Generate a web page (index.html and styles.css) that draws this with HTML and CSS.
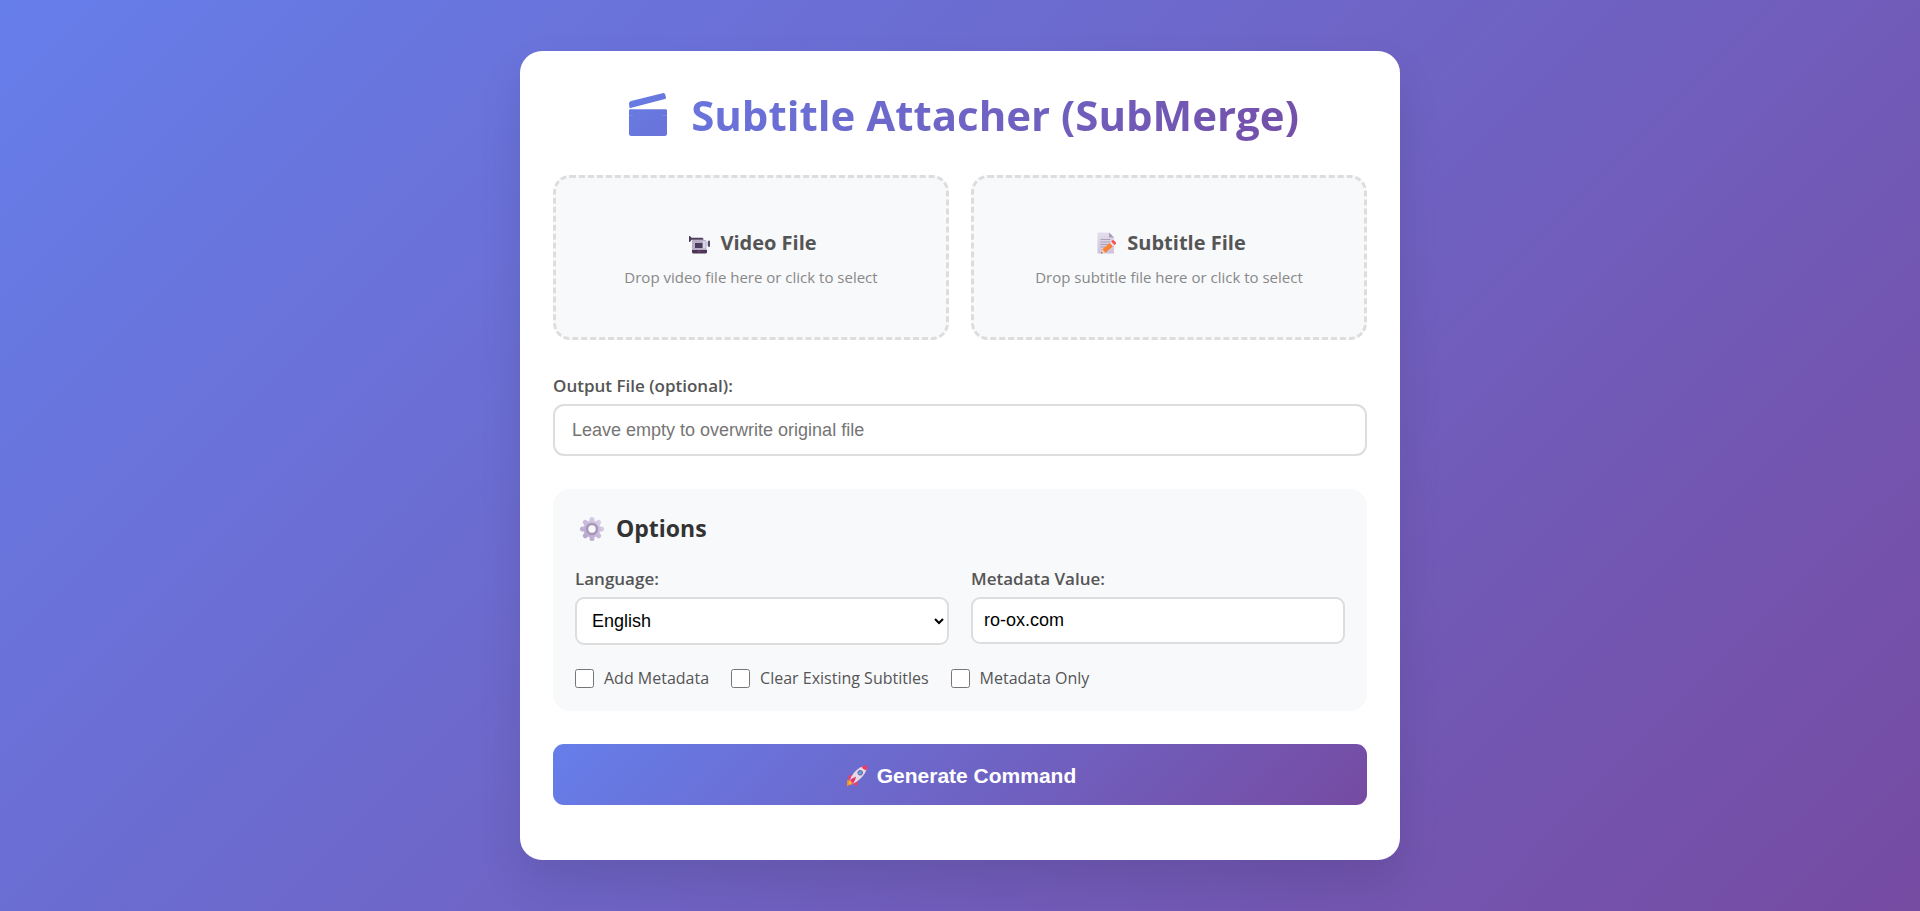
FILE: index.html
```html
<!DOCTYPE html>
<html lang="en">
<head>
<meta charset="utf-8">
<meta name="viewport" content="width=device-width, initial-scale=1">
<title>Subtitle Attacher (SubMerge)</title>
<link rel="stylesheet" href="styles.css">
</head>
<body>
<main class="card">
  <h1 class="title">
    <svg class="title-icon" viewBox="0 0 38 44" aria-hidden="true">
      <defs><linearGradient id="clap" x1="0" y1="0" x2="1" y2="1"><stop offset="0" stop-color="#667ce3"/><stop offset="1" stop-color="#6a73d9"/></linearGradient></defs>
      <path fill="url(#clap)" d="M0 10.500Q0 8.500 2 8L33.500 .2Q35.500 -.2 36.200 1.500L37 4.500Q37.200 5.700 36 6.100L.5 15.200ZM0 17.500Q0 16.300 1.200 16.300H36.800Q38 16.300 38 17.500V40.500Q38 43 35.500 43H2.500Q0 43 0 40.500Z"/>
      <path stroke="#8492e6" stroke-width=".6" d="M0 22.500H4M33 22.500H38"/>
    </svg>
    <span class="title-text">Subtitle Attacher (SubMerge)</span>
  </h1>

  <div class="drops">
    <button type="button" class="drop">
      <span class="drop-title">
        <svg class="icon" viewBox="0 0 22 22" aria-hidden="true">
          <path fill="#b9aec6" d="M3 8H16Q17.500 8 17.500 9.500V18H3Z"/>
          <path fill="#dcd5e4" d="M13.800 9H16.500V16.500H13.800Z"/>
          <path fill="#4b3d5c" d="M0 4H1L2.500 5.800H13Q14.500 5.800 14.500 7.800H2.500L1 10H0Z"/>
          <rect x="6" y="11" width="7.500" height="5" fill="#4b3d5c"/>
          <path fill="#cfc6d8" d="M17.500 9.500H19V14H17.500Z"/>
          <rect x="19" y="8.500" width="2" height="6.500" rx="1" fill="#584a6b"/>
          <path fill="#4b3658" d="M3 18H18V20Q18 21.500 16.500 21.500H4.500Q3 21.500 3 20Z"/>
          <circle cx="10" cy="19.600" r=".8" fill="#d03b5b"/>
        </svg>
        Video File
      </span>
      <span class="drop-hint">Drop video file here or click to select</span>
    </button>
    <button type="button" class="drop">
      <span class="drop-title">
        <svg class="icon" viewBox="0 0 22 22" aria-hidden="true">
          <defs>
            <linearGradient id="sheet" x1="0" y1="0" x2="0" y2="1"><stop offset="0" stop-color="#e4deec"/><stop offset="1" stop-color="#cfc2db"/></linearGradient>
            <linearGradient id="wood" x1="0" y1="0" x2="1" y2="1"><stop offset="0" stop-color="#ff9d3c"/><stop offset="1" stop-color="#f26732"/></linearGradient>
          </defs>
          <path fill="url(#sheet)" d="M2 .5H13L18 5.500V21.500H2Q1.500 21.500 1.500 21V1Q1.500 .5 2 .5Z"/>
          <path fill="#a99bb9" d="M13 .5L18 5.500H14Q13 5.500 13 4.500Z"/>
          <path stroke="#a79cb4" stroke-width=".9" d="M4.500 7.500H14.500M4.500 10H14.500M4.500 12.500H13M4.500 15H10"/>
          <path fill="#ffd0a0" d="M5 21.500L6.500 17L9.500 20.500Z"/>
          <path fill="#54305c" d="M5 21.500L5.500 19.900L6.900 21Z"/>
          <path fill="url(#wood)" d="M6.300 17.400L13.800 10.700L17 14.300L9.300 20.800Z"/>
          <path fill="#e9e0ed" d="M13.800 10.700L15.200 9.500L18.400 13L17 14.300Z"/>
          <path fill="#f8504f" d="M15.200 9.500L16.500 8.300Q17.300 7.700 18 8.500L19.900 10.600Q20.500 11.300 19.800 12L18.400 13Z"/>
        </svg>
        Subtitle File
      </span>
      <span class="drop-hint">Drop subtitle file here or click to select</span>
    </button>
  </div>

  <div class="field output">
    <label class="label" for="output">Output File (optional):</label>
    <input class="control control-large" id="output" type="text" placeholder="Leave empty to overwrite original file">
  </div>

  <section class="options">
    <h2 class="options-title">
      <svg class="icon-gear" viewBox="0 0 24 24" aria-hidden="true">
        <defs><linearGradient id="gear" gradientUnits="userSpaceOnUse" x1="2" y1="22" x2="22" y2="2"><stop offset="0" stop-color="#b3a1cc"/><stop offset="1" stop-color="#ddd5e9"/></linearGradient></defs>
        <g stroke="url(#gear)" stroke-width="5" stroke-linecap="round">
          <path d="M12 2.500V21.500M2.500 12H21.500M5.300 5.300L18.700 18.700M18.700 5.300L5.300 18.700"/>
        </g>
        <circle cx="12" cy="12" r="8.500" fill="url(#gear)"/>
        <circle cx="12" cy="12" r="5" fill="#f8f9fb" stroke="#a796ba" stroke-width="2.600"/>
      </svg>
      Options
    </h2>
    <div class="option-grid">
      <div class="field">
        <label class="label" for="language">Language:</label>
        <select class="control control-select" id="language">
          <option>English</option>
          <option>Romanian</option>
        </select>
      </div>
      <div class="field">
        <label class="label" for="metadata">Metadata Value:</label>
        <input class="control" id="metadata" type="text" value="ro-ox.com">
      </div>
    </div>
    <div class="checks">
      <label class="check" for="add"><input class="box" type="checkbox" id="add">Add Metadata</label>
      <label class="check" for="clear"><input class="box" type="checkbox" id="clear">Clear Existing Subtitles</label>
      <label class="check" for="only"><input class="box" type="checkbox" id="only">Metadata Only</label>
    </div>
  </section>

  <button type="button" class="generate">
    <svg class="icon" viewBox="0 0 22 22" aria-hidden="true">
      <path fill="#f58b2b" d="M1 15.500L4 14.500L7 18Q6.500 20.500 3.500 20L1 21.500Z"/>
      <path fill="#ffb43b" d="M2.500 17L5 16L5.500 18.500L3 19.500Z"/>
      <path fill="#ee3e6d" d="M7.500 9.500L3 10.500Q1.500 12 2 14L6 13.500ZM12 15L11.500 19.500Q11 21.500 9.500 21.500L7.500 17Z"/>
      <path fill="#e2dae6" d="M4 15.500Q6 7.500 14 2.500Q17.500 .8 20.500 1Q21 4.500 19 8Q14.500 15.500 7 18.500Z"/>
      <path fill="#f3375d" d="M15.500 1.800Q18 .6 21 .6Q21.300 3.500 20.300 5.500Q17.200 5 15.500 1.800Z"/>
      <path fill="#e73064" d="M4 15Q6.500 13 10 11.500Q9.500 15.500 7 18.500Z"/>
      <circle cx="14.200" cy="7.800" r="2.300" fill="#55a4e8" stroke="#765c92" stroke-width="1"/>
    </svg>
    Generate Command
  </button>
</main>
</body>
</html>
```
FILE: styles.css
```css
* {
  box-sizing: border-box;
  margin: 0;
  padding: 0;
}

body {
  min-height: 100vh;
  display: flex;
  align-items: center;
  justify-content: center;
  padding: 22px;
  background: linear-gradient(135deg, #667eea 0%, #764ba2 100%);
  color: #333;
  font-family: "Segoe UI", "Open Sans", "Noto Sans", sans-serif;
}

.card {
  width: 100%;
  max-width: 880px;
  padding: 33px 33px 55px;
  background: #fff;
  border-radius: 22px;
  box-shadow: 0 22px 44px rgba(0, 0, 0, 0.1);
}

.title {
  display: flex;
  align-items: center;
  justify-content: center;
  gap: 24px;
  margin-bottom: 33px;
  padding: 4px 0 0 8px;
  font-size: 42px;
  line-height: 54px;
  font-weight: 700;
  background: linear-gradient(135deg, #667eea 0%, #764ba2 100%);
  -webkit-background-clip: text;
  background-clip: text;
  -webkit-text-fill-color: transparent;
}

.title-icon {
  width: 38px;
  height: 44px;
}

.drops,
.option-grid {
  display: grid;
  grid-template-columns: 1fr 1fr;
  gap: 22px;
}

.drops {
  margin-bottom: 33px;
}

.drop {
  display: flex;
  flex-direction: column;
  align-items: center;
  gap: 6px;
  padding: 48px 30px;
  background: #f8f9fb;
  border: 3px dashed #ddd;
  border-radius: 17px;
  font-family: inherit;
  cursor: pointer;
}

.drop-title {
  display: flex;
  align-items: center;
  gap: 9px;
  padding-left: 4px;
  color: #555;
  font-size: 20px;
  line-height: 34px;
  font-weight: 700;
}

.drop-hint {
  color: #888;
  font-size: 15px;
  line-height: 23px;
}

.icon {
  width: 22px;
  height: 22px;
}

.field {
  display: flex;
  flex-direction: column;
  align-items: stretch;
  gap: 6px;
}

.output {
  margin-bottom: 33px;
}

.label {
  color: #555;
  font-size: 17px;
  line-height: 25px;
  font-weight: 600;
}

.control {
  width: 100%;
  padding: 11px;
  background: #fff;
  border: 2px solid #ddd;
  border-radius: 9px;
  color: #000;
  font-family: "Liberation Sans", Arial, sans-serif;
  font-size: 18px;
  line-height: 21px;
}

.control-large {
  height: 52px;
  padding: 0 17px;
  border-radius: 11px;
}

.control::placeholder {
  color: #757575;
}

.control-select {
  height: 48px;
}

.options {
  margin-bottom: 33px;
  padding: 22px;
  background: #f8f9fb;
  border-radius: 17px;
}

.options-title {
  display: flex;
  align-items: center;
  gap: 12px;
  margin-bottom: 20px;
  padding-left: 5px;
  font-size: 23px;
  line-height: 35px;
  font-weight: 700;
}

.icon-gear {
  width: 24px;
  height: 24px;
}

.option-grid {
  align-items: start;
  margin-bottom: 22px;
}

.checks {
  display: flex;
  flex-wrap: wrap;
  gap: 22px;
}

.check {
  display: flex;
  align-items: center;
  gap: 10px;
  color: #555;
  font-size: 16px;
  line-height: 22px;
}

.box {
  width: 19px;
  height: 19px;
}

.generate {
  display: flex;
  align-items: center;
  justify-content: center;
  gap: 9px;
  width: 100%;
  padding: 19px 18px 17px 20px;
  background: linear-gradient(135deg, #667eea 0%, #764ba2 100%);
  border: 0;
  border-radius: 11px;
  color: #fff;
  font-family: "Liberation Sans", Arial, sans-serif;
  font-size: 21px;
  line-height: 25px;
  font-weight: 700;
  cursor: pointer;
}
```
